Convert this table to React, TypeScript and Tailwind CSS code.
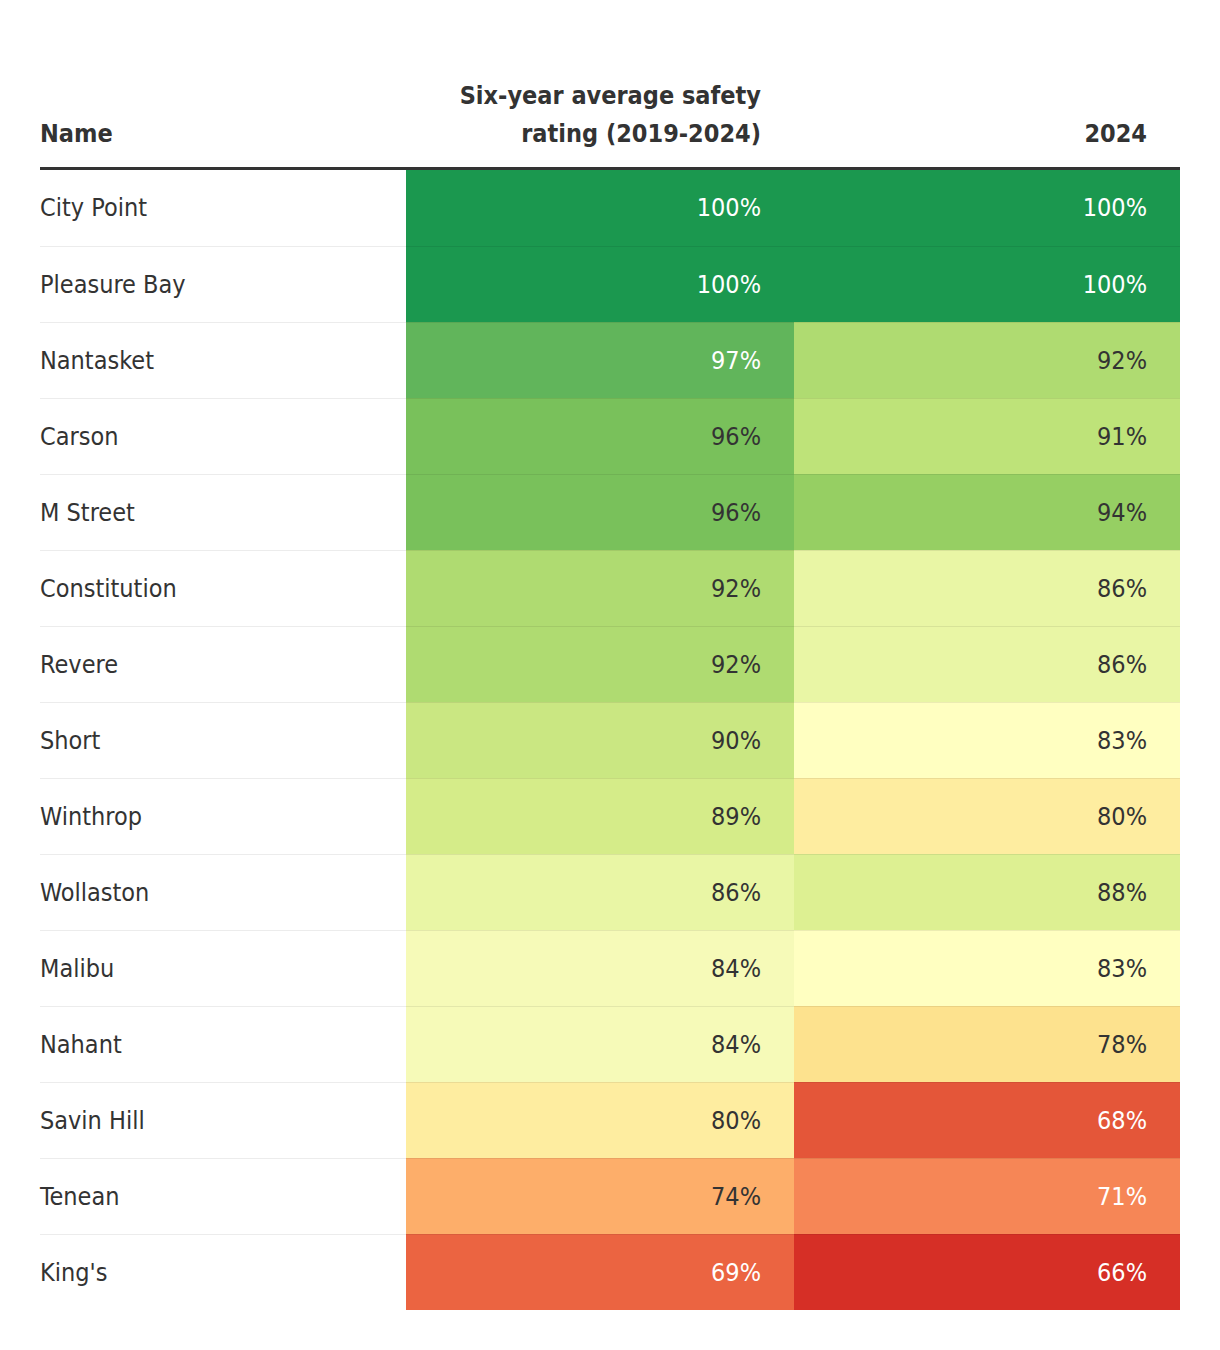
const FONT = {
  fontFamily: '"Liberation Sans Narrow", "DejaVu Sans Condensed", "Roboto Condensed", "Liberation Sans", sans-serif',
};

type Row = { name: string; avg: number; y24: number };

const rows: Row[] = [
  { name: "City Point", avg: 100, y24: 100 },
  { name: "Pleasure Bay", avg: 100, y24: 100 },
  { name: "Nantasket", avg: 97, y24: 92 },
  { name: "Carson", avg: 96, y24: 91 },
  { name: "M Street", avg: 96, y24: 94 },
  { name: "Constitution", avg: 92, y24: 86 },
  { name: "Revere", avg: 92, y24: 86 },
  { name: "Short", avg: 90, y24: 83 },
  { name: "Winthrop", avg: 89, y24: 80 },
  { name: "Wollaston", avg: 86, y24: 88 },
  { name: "Malibu", avg: 84, y24: 83 },
  { name: "Nahant", avg: 84, y24: 78 },
  { name: "Savin Hill", avg: 80, y24: 68 },
  { name: "Tenean", avg: 74, y24: 71 },
  { name: "King's", avg: 69, y24: 66 },
];

// full class strings so tailwind picks them up
const cellColor: Record<number, string> = {
  100: "bg-[#1b984f] text-white",
  97: "bg-[#61b55b] text-white",
  96: "bg-[#79c15b] text-[#333]",
  94: "bg-[#96cf63] text-[#333]",
  92: "bg-[#afdb71] text-[#333]",
  91: "bg-[#bee379] text-[#333]",
  90: "bg-[#cae782] text-[#333]",
  89: "bg-[#d5ec89] text-[#333]",
  88: "bg-[#ddf092] text-[#333]",
  86: "bg-[#e9f6a5] text-[#333]",
  84: "bg-[#f6fab8] text-[#333]",
  83: "bg-[#ffffc1] text-[#333]",
  80: "bg-[#feeda0] text-[#333]",
  78: "bg-[#fde28e] text-[#333]",
  74: "bg-[#fdae6a] text-[#333]",
  71: "bg-[#f68656] text-white",
  69: "bg-[#eb6441] text-white",
  68: "bg-[#e45639] text-white",
  66: "bg-[#d62f26] text-white",
};

export default function App() {
  return (
    <div className="min-h-[1350px] bg-white px-10 pt-[77px]" style={FONT}>
      <div className="grid grid-cols-[366px_388px_386px]">
        {/* header */}
        <div className="flex items-end border-b-[3px] border-[#333] pb-[14px] text-[25px] font-bold leading-[38px] text-[#333]">
          Name
        </div>
        <div className="flex items-end justify-end border-b-[3px] border-[#333] pb-[14px] pr-[33px] text-right text-[25px] font-bold leading-[38px] text-[#333]">
          <span>
            Six-year average safety
            <br />
            rating (2019-2024)
          </span>
        </div>
        <div className="flex items-end justify-end border-b-[3px] border-[#333] pb-[14px] pr-[33px] text-[25px] font-bold leading-[38px] text-[#333]">
          2024
        </div>

        {/* body */}
        {rows.map((r, i) => (
          <div key={r.name} className="contents">
            <div
              className={`flex h-[76px] items-center text-[25px] text-[#333] ${
                i === 0 ? "" : "border-t border-black/[0.075]"
              }`}
            >
              {r.name}
            </div>
            <div
              className={`flex h-[76px] items-center justify-end pr-[33px] text-[25px] ${cellColor[r.avg]} ${
                i === 0 ? "" : "border-t border-black/[0.075]"
              }`}
            >
              {r.avg}%
            </div>
            <div
              className={`flex h-[76px] items-center justify-end pr-[33px] text-[25px] ${cellColor[r.y24]} ${
                i === 0 ? "" : "border-t border-black/[0.075]"
              }`}
            >
              {r.y24}%
            </div>
          </div>
        ))}
      </div>
    </div>
  );
}
